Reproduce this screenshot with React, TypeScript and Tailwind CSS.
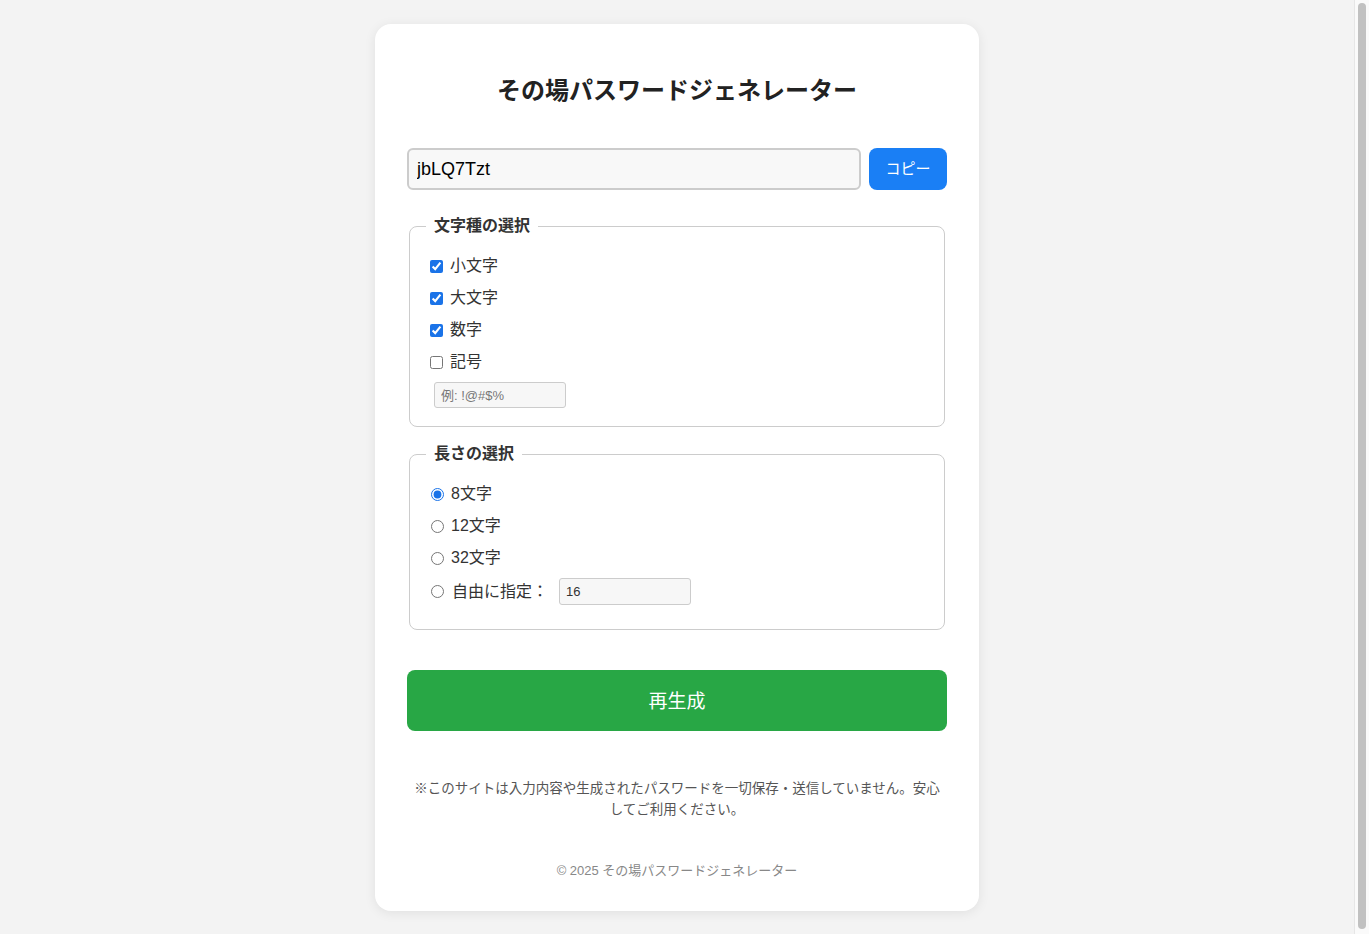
import React, { useState } from 'react';

const FONT = { fontFamily: '"Liberation Sans", "Noto Sans CJK JP", sans-serif' };

export default function App() {
  const [password, setPassword] = useState('jbLQ7Tzt');
  const [lower, setLower] = useState(true);
  const [upper, setUpper] = useState(true);
  const [digits, setDigits] = useState(true);
  const [symbols, setSymbols] = useState(false);
  const [symbolSet, setSymbolSet] = useState('');
  const [length, setLength] = useState<'8' | '12' | '32' | 'custom'>('8');
  const [custom, setCustom] = useState('16');

  const regenerate = () => {
    let chars = '';
    if (lower) chars += 'abcdefghijklmnopqrstuvwxyz';
    if (upper) chars += 'ABCDEFGHIJKLMNOPQRSTUVWXYZ';
    if (digits) chars += '0123456789';
    if (symbols) chars += symbolSet || '!@#$%';
    if (!chars) return;
    const n = length === 'custom' ? parseInt(custom) || 16 : parseInt(length);
    let out = '';
    for (let i = 0; i < n; i++) out += chars[Math.floor(Math.random() * chars.length)];
    setPassword(out);
  };

  const checks = [
    { label: '小文字', value: lower, set: setLower },
    { label: '大文字', value: upper, set: setUpper },
    { label: '数字', value: digits, set: setDigits },
    { label: '記号', value: symbols, set: setSymbols },
  ];

  return (
    <div className="min-h-screen bg-[#f3f3f3] pt-6 pb-[40px] pr-[15px]" style={FONT}>
      <div className="mx-auto w-[604px] bg-white rounded-2xl shadow-[0_2px_12px_rgba(0,0,0,0.08)] px-8 pt-8 pb-[30px]">
        {/* Title */}
        <h1 className="mt-[18px] text-center text-[24px] leading-[33px] font-bold text-[#222]">
          その場パスワードジェネレーター
        </h1>

        {/* Output */}
        <div className="mt-[41px] flex gap-2">
          <input
            type="text"
            readOnly
            value={password}
            className="flex-1 h-[42px] border-2 border-[#ccc] rounded-md bg-[#f8f8f8] px-2 text-[18px] text-black outline-none"
          />
          <button className="w-[78px] h-[42px] rounded-lg bg-[#1a7ff5] text-white text-[15px]">
            コピー
          </button>
        </div>

        {/* Character types */}
        <fieldset className="mt-[24px] mx-[2px] border border-[#ccc] rounded-lg px-[20px] pt-[16px] pb-[18px]">
          <legend className="-ml-[4px] px-[8px] text-[16px] leading-[24px] font-bold text-[#333]">文字種の選択</legend>
          {checks.map((c) => (
            <label key={c.label} className="flex items-center h-[24px] mb-[8px] text-[16px] text-[#333]">
              <input
                type="checkbox"
                checked={c.value}
                onChange={(e) => c.set(e.target.checked)}
                className="w-[13px] h-[13px] mr-[7px] accent-[#1a73e8]"
              />
              {c.label}
            </label>
          ))}
          <input
            type="text"
            value={symbolSet}
            onChange={(e) => setSymbolSet(e.target.value)}
            placeholder="例: !@#$%"
            className="block ml-[4px] mt-[1px] w-[132px] h-[26px] border border-[#ccc] rounded-[3px] bg-[#f7f7f7] px-[6px] text-[13px] text-[#333] placeholder:text-[#777] outline-none"
          />
        </fieldset>

        {/* Length */}
        <fieldset className="mt-[15px] mx-[2px] border border-[#ccc] rounded-lg px-[20px] pt-[16px] pb-[24px]">
          <legend className="-ml-[4px] px-[8px] text-[16px] leading-[24px] font-bold text-[#333]">長さの選択</legend>
          {(['8', '12', '32'] as const).map((v) => (
            <label key={v} className="flex items-center h-[24px] mb-[8px] text-[16px] text-[#333]">
              <input
                type="radio"
                name="len"
                checked={length === v}
                onChange={() => setLength(v)}
                className="w-[13px] h-[13px] ml-[1px] mr-[7px] accent-[#1a73e8]"
              />
              {v}文字
            </label>
          ))}
          <div className="flex items-center h-[27px]">
            <label className="flex items-center text-[16px] text-[#333]">
              <input
                type="radio"
                name="len"
                checked={length === 'custom'}
                onChange={() => setLength('custom')}
                className="w-[13px] h-[13px] ml-[1px] mr-[8px] accent-[#1a73e8]"
              />
              自由に指定：
            </label>
            <input
              type="text"
              value={custom}
              onChange={(e) => setCustom(e.target.value)}
              className="ml-[11px] w-[132px] h-[27px] border border-[#ccc] rounded-[3px] bg-[#f7f7f7] px-[6px] text-[13px] text-[#333] outline-none"
            />
          </div>
        </fieldset>

        {/* Regenerate */}
        <button
          onClick={regenerate}
          className="mt-[40px] w-full h-[61px] pt-[3px] rounded-lg bg-[#28a745] text-white text-[19px]"
        >
          再生成
        </button>

        <p className="mt-[47px] px-[5px] text-center text-[13.5px] leading-[21px] text-[#555]">
          ※このサイトは入力内容や生成されたパスワードを一切保存・送信していません。安心してご利用ください。
        </p>

        <p className="mt-[41px] text-center text-[13px] leading-[20px] text-[#888]">
          © 2025 その場パスワードジェネレーター
        </p>
      </div>

      {/* page scrollbar */}
      <div className="fixed top-0 right-0 bottom-0 w-[15px] bg-[#fafafa] border-l border-[#e6e6e6] flex justify-center pt-[3px] pb-[5px]">
        <div className="w-[8px] h-full rounded-full bg-[#c1c1c1]" />
      </div>
    </div>
  );
}
